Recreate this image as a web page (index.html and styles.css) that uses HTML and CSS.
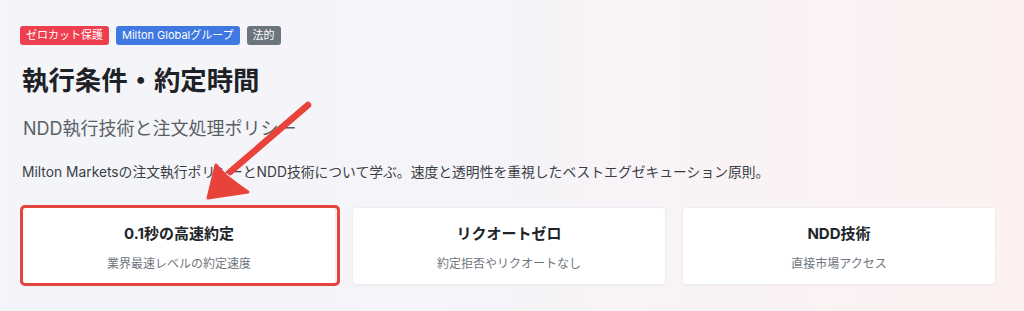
FILE: index.html
```html
<!DOCTYPE html>
<html lang="ja">
<head>
<meta charset="utf-8">
<title>執行条件・約定時間</title>
<link rel="stylesheet" href="styles.css">
</head>
<body>
<div class="page">
  <div class="badges">
    <span class="badge badge-red">ゼロカット保護</span>
    <span class="badge badge-blue">Milton Globalグループ</span>
    <span class="badge badge-gray">法的</span>
  </div>
  <h1 class="title">執行条件・約定時間</h1>
  <p class="subtitle">NDD執行技術と注文処理ポリシー</p>
  <p class="desc">Milton Marketsの注文執行ポリシーとNDD技術について学ぶ。速度と透明性を重視したベストエグゼキューション原則。</p>
  <div class="cards">
    <div class="card card-marked">
      <div class="card-title">0.1秒の高速約定</div>
      <div class="card-sub">業界最速レベルの約定速度</div>
      <div class="mark"></div>
    </div>
    <div class="card">
      <div class="card-title">リクオートゼロ</div>
      <div class="card-sub">約定拒否やリクオートなし</div>
    </div>
    <div class="card">
      <div class="card-title">NDD技術</div>
      <div class="card-sub">直接市場アクセス</div>
    </div>
  </div>
  <svg class="arrow" width="130" height="110" viewBox="0 0 130 110">
    <line x1="118" y1="8" x2="40" y2="75" stroke="#e8423a" stroke-width="6.5" stroke-linecap="round"/>
    <polygon points="18,101 26,68 36,79 48,88 58,95" fill="#e8423a" stroke="#e8423a" stroke-width="3" stroke-linejoin="round"/>
  </svg>
</div>
</body>
</html>
```
FILE: styles.css
```css
* { box-sizing: border-box; }
html, body { margin: 0; padding: 0; }
body {
  width: 1024px;
  height: 311px;
  overflow: hidden;
  font-family: Inter, "Noto Sans CJK JP", sans-serif;
  background: linear-gradient(90deg, #f3f5f9 0%, #f6f4f8 50%, #fdf1f1 100%);
  color: #212529;
}
.page {
  position: relative;
  padding: 26px 28px 0 20px;
}
.badges {
  display: flex;
  gap: 7px;
}
.badge {
  display: inline-block;
  height: 19px;
  line-height: 19px;
  padding: 0 6px;
  font-size: 11px;
  color: #fff;
  border-radius: 3px;
  font-weight: 400;
}
.badge-red { background: #ef3f4e; }
.badge-blue { background: #3f78e0; }
.badge-gray { background: #6c757d; }
.title {
  margin: 18px 0 0 2px;
  font-size: 26.4px;
  line-height: 34px;
  font-weight: 700;
  color: #1e2125;
}
.subtitle {
  margin: 19px 0 0 3px;
  font-size: 18px;
  line-height: 26px;
  color: #5a5f66;
}
.desc {
  margin: 20px 0 0 2px;
  font-size: 13.8px;
  line-height: 20px;
  color: #3a3e44;
}
.cards {
  margin: 25px 0 0 2px;
  display: grid;
  grid-template-columns: repeat(3, 1fr);
  gap: 16px;
}
.card {
  position: relative;
  height: 78px;
  background: #fff;
  border: 1px solid #eceef1;
  border-radius: 4px;
  box-shadow: 0 1px 2px rgba(0,0,0,0.04);
  text-align: center;
  padding-top: 15px;
}
.card-title {
  font-size: 15px;
  line-height: 22px;
  font-weight: 700;
  color: #212529;
}
.card-sub {
  margin-top: 11px;
  font-size: 12px;
  line-height: 16px;
  color: #6f757c;
}
.mark {
  position: absolute;
  left: -3px;
  right: -5px;
  top: -3px;
  bottom: -2px;
  border: 3px solid #e5443d;
  border-radius: 5px;
}
.arrow {
  position: absolute;
  left: 190px;
  top: 97px;
}
```
